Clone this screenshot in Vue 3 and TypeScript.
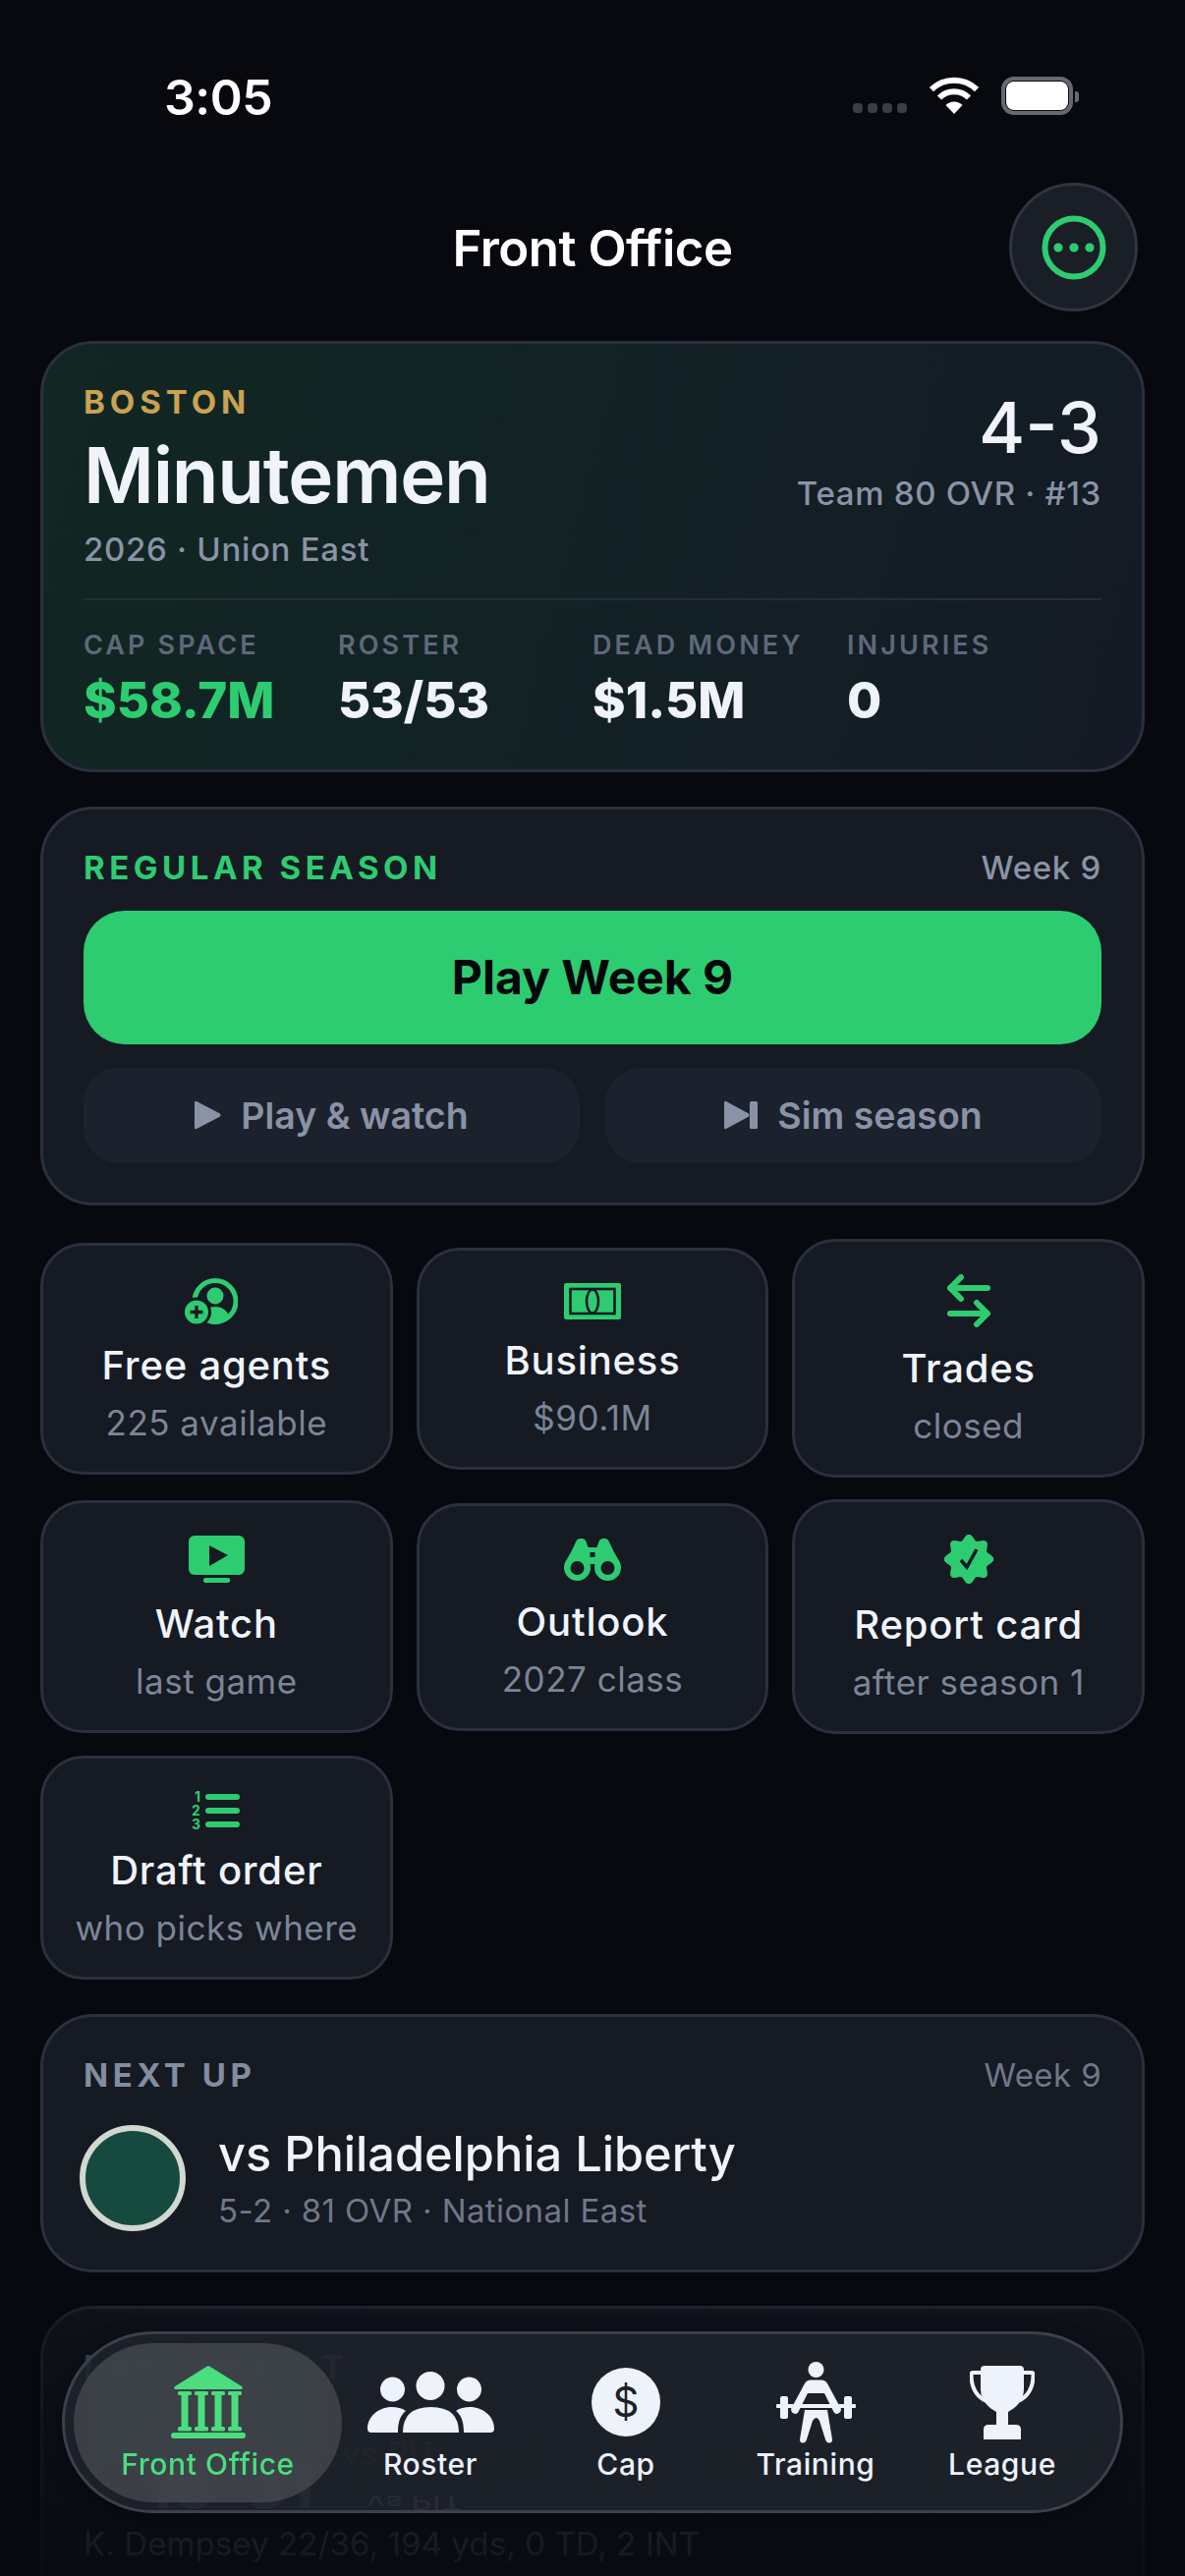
<script setup lang="ts">
const stats = [
  { label: 'CAP SPACE', value: '$58.7M', green: true },
  { label: 'ROSTER', value: '53/53', green: false },
  { label: 'DEAD MONEY', value: '$1.5M', green: false },
  { label: 'INJURIES', value: '0', green: false },
]

const tiles = [
  { icon: 'agents', title: 'Free agents', sub: '225 available' },
  { icon: 'business', title: 'Business', sub: '$90.1M' },
  { icon: 'trades', title: 'Trades', sub: 'closed' },
  { icon: 'watch', title: 'Watch', sub: 'last game' },
  { icon: 'outlook', title: 'Outlook', sub: '2027 class' },
  { icon: 'report', title: 'Report card', sub: 'after season 1' },
  { icon: 'draft', title: 'Draft order', sub: 'who picks where' },
]

// wavy seal outline for the report card icon
function sealPath(): string {
  const pts: string[] = []
  for (let i = 0; i < 96; i++) {
    const a = (i / 96) * Math.PI * 2
    const r = 22.5 + 2.8 * Math.cos(a * 8)
    pts.push(`${(26 + r * Math.sin(a)).toFixed(2)} ${(25 - r * Math.cos(a)).toFixed(2)}`)
  }
  return 'M' + pts.join('L') + 'Z'
}
const seal = sealPath()

const tabs = [
  { icon: 'bank', label: 'Front Office', active: true },
  { icon: 'people', label: 'Roster', active: false },
  { icon: 'cap', label: 'Cap', active: false },
  { icon: 'training', label: 'Training', active: false },
  { icon: 'league', label: 'League', active: false },
]
</script>

<template>
  <div class="screen">
    <div class="status">
      <span class="time">3:05</span>
      <div class="status-right">
        <div class="signal"><i></i><i></i><i></i><i></i></div>
        <svg class="wifi" width="50" height="38" viewBox="0 0 50 38" fill="none" stroke="#fff" stroke-width="6">
          <path d="M2 13A33 33 0 0 1 48 13" />
          <path d="M10 21.5A21 21 0 0 1 40 21.5" />
          <path d="M25 38L16.5 29A12 12 0 0 1 33.5 29Z" fill="#fff" stroke="none" />
        </svg>
        <div class="battery"><b></b></div>
      </div>
    </div>

    <header class="nav">
      <h1>Front Office</h1>
      <button class="menu">
        <svg width="66" height="66" viewBox="0 0 66 66" fill="none">
          <circle cx="33" cy="33" r="29.5" stroke="#2ecc71" stroke-width="6" />
          <circle cx="17" cy="33" r="4.6" fill="#2ecc71" />
          <circle cx="33" cy="33" r="4.6" fill="#2ecc71" />
          <circle cx="49" cy="33" r="4.6" fill="#2ecc71" />
        </svg>
      </button>
    </header>

    <main class="content">
      <section class="card team">
        <div class="team-top">
          <div>
            <div class="city">BOSTON</div>
            <div class="name">Minutemen</div>
            <div class="muted">2026 · Union East</div>
          </div>
          <div class="record-box">
            <div class="record">4-3</div>
            <div class="muted">Team 80 OVR · #13</div>
          </div>
        </div>
        <div class="stats">
          <div v-for="s in stats" :key="s.label">
            <div class="stat-label">{{ s.label }}</div>
            <div class="stat-value" :class="{ green: s.green }">{{ s.value }}</div>
          </div>
        </div>
      </section>

      <section class="card season">
        <div class="row-between">
          <span class="eyebrow green">REGULAR SEASON</span>
          <span class="muted">Week 9</span>
        </div>
        <button class="primary">Play Week 9</button>
        <div class="actions">
          <button class="secondary">
            <svg width="27" height="30" viewBox="0 0 27 30"><path d="M2 1L26 13.5Q27 15 26 16.5L2 29Q0 29.5 0 28V2Q0 .5 2 1Z" fill="#8a93a6" /></svg>
            <span>Play &amp; watch</span>
          </button>
          <button class="secondary">
            <svg width="34" height="30" viewBox="0 0 34 30"><path d="M2 1L25 13.5Q26 15 25 16.5L2 29Q0 29.5 0 28V2Q0 .5 2 1Z" fill="#8a93a6" /><rect x="26" y="1" width="8" height="28" rx="1.5" fill="#8a93a6" /></svg>
            <span>Sim season</span>
          </button>
        </div>
      </section>

      <section class="tiles">
        <div v-for="t in tiles" :key="t.title" class="tile">
          <svg v-if="t.icon === 'agents'" class="off-left" width="54" height="47" viewBox="0 0 54 47">
            <circle cx="31" cy="23.5" r="21" fill="none" stroke="#2ecc71" stroke-width="5" />
            <circle cx="31" cy="18" r="8.5" fill="#2ecc71" />
            <path d="M17 39C19 32 25 29 31 29C37 29 43 32 45 39C41 44 36 47 31 47C26 47 21 44 17 39Z" fill="#2ecc71" />
            <circle cx="12" cy="34.5" r="15" fill="#151a23" />
            <circle cx="12" cy="34.5" r="12" fill="#2ecc71" />
            <path d="M12 28V41M5.5 34.5H18.5" stroke="#151a23" stroke-width="3.4" />
          </svg>
          <svg v-else-if="t.icon === 'business'" width="58" height="37" viewBox="0 0 58 37">
            <rect width="58" height="37" rx="2" fill="#2ecc71" />
            <rect x="6.5" y="6" width="45" height="25" fill="none" stroke="#151a23" stroke-width="2.6" />
            <ellipse cx="29" cy="18.5" rx="6" ry="12" fill="none" stroke="#151a23" stroke-width="2.6" />
          </svg>
          <svg v-else-if="t.icon === 'trades'" width="46" height="54" viewBox="0 0 46 54" fill="none" stroke="#2ecc71" stroke-width="6" stroke-linecap="round" stroke-linejoin="round">
            <path d="M4 14H42M15 3L4 14L15 25" />
            <path d="M4 40H42M31 29L42 40L31 51" />
          </svg>
          <svg v-else-if="t.icon === 'watch'" width="57" height="48" viewBox="0 0 57 48">
            <rect width="57" height="40" rx="6" fill="#2ecc71" />
            <path d="M21 10L40 20L21 31Z" fill="#151a23" />
            <rect x="15" y="43" width="27" height="5" rx="2" fill="#2ecc71" />
          </svg>
          <svg v-else-if="t.icon === 'outlook'" width="58" height="43" viewBox="0 0 58 43">
            <path d="M13 1.5C16 -.5 20 -.5 22 2L25 10V32H0.5C0 28 3 20 7 14Z" fill="#2ecc71" />
            <path d="M45 1.5C42 -.5 38 -.5 36 2L33 10V32H57.5C58 28 55 20 51 14Z" fill="#2ecc71" />
            <rect x="24" y="9" width="10" height="17" fill="#2ecc71" />
            <rect x="26.5" y="14" width="5" height="5" fill="#151a23" />
            <circle cx="13.5" cy="29.5" r="13.5" fill="#2ecc71" />
            <circle cx="44.5" cy="29.5" r="13.5" fill="#2ecc71" />
            <circle cx="13.5" cy="30" r="7" fill="#151a23" />
            <circle cx="44.5" cy="30" r="7" fill="#151a23" />
          </svg>
          <svg v-else-if="t.icon === 'report'" width="52" height="50" viewBox="0 0 52 50">
            <path :d="seal" fill="#2ecc71" />
            <path d="M18 26L24 33L34 15" fill="none" stroke="#151a23" stroke-width="3.6" />
          </svg>
          <svg v-else-if="t.icon === 'draft'" class="list-icon" width="50" height="39" viewBox="0 0 50 39">
            <text x="3" y="11" class="list-num">1</text>
            <text x="0" y="25" class="list-num">2</text>
            <text x="0" y="39" class="list-num">3</text>
            <rect x="14" y="3" width="35" height="6" rx="3" fill="#2ecc71" />
            <rect x="14" y="17" width="35" height="6" rx="3" fill="#2ecc71" />
            <rect x="14" y="31" width="35" height="6" rx="3" fill="#2ecc71" />
          </svg>
          <div class="tile-title">{{ t.title }}</div>
          <div class="tile-sub">{{ t.sub }}</div>
        </div>
      </section>

      <section class="card next">
        <div class="row-between">
          <span class="eyebrow grey">NEXT UP</span>
          <span class="dim">Week 9</span>
        </div>
        <div class="match">
          <div class="crest"></div>
          <div>
            <div class="match-title">vs Philadelphia Liberty</div>
            <div class="dim">5-2 · 81 OVR · National East</div>
          </div>
        </div>
      </section>

      <section class="card last">
        <div class="eyebrow grey">LAST RESULT</div>
        <div class="score-row">
          <span class="score">16-31</span>
          <span class="dim vs">vs PIT</span>
        </div>
        <div class="dim stat-line">K. Dempsey 22/36, 194 yds, 0 TD, 2 INT</div>
      </section>
    </main>

    <div class="fade"></div>

    <nav class="tabbar">
      <span class="mirror">vs PIT</span>
      <div v-for="tab in tabs" :key="tab.label" class="tab" :class="{ active: tab.active }">
        <div class="tab-icon">
          <svg v-if="tab.icon === 'bank'" width="76" height="74" viewBox="0 0 76 74" fill="#4ade80">
            <path d="M36 1Q38 -.5 40 1L72 21Q74 24 71 24H5Q2 24 4 21Z" />
            <g v-for="x in [7, 24, 41, 58]" :key="x">
              <rect :x="x" y="26" width="14" height="4" rx="1.5" />
              <rect :x="x + 3.5" y="28" width="7" height="36" />
              <rect :x="x" y="62" width="14" height="4.5" rx="1.5" />
            </g>
            <rect y="68" width="76" height="6" rx="3" />
          </svg>
          <svg v-else-if="tab.icon === 'people'" width="129" height="62" viewBox="0 0 129 62" fill="#eef2fb">
            <circle cx="25.5" cy="18" r="12.5" />
            <circle cx="64" cy="14.5" r="14.5" />
            <circle cx="103.5" cy="18" r="12.5" />
            <path d="M0 58C0 46 11 36 25 36C30 36 35 37 39 40C34 44 31 50 31 62H4Q0 62 0 58Z" />
            <path d="M129 58C129 46 118 36 104 36C99 36 94 37 90 40C95 44 98 50 98 62H125Q129 62 129 58Z" />
            <path d="M36 62Q36 36 64.5 36Q93 36 93 62H36Z" />
          </svg>
          <div v-else-if="tab.icon === 'cap'" class="coin">$</div>
          <svg v-else-if="tab.icon === 'training'" width="81" height="83" viewBox="0 0 81 83" fill="#eef2fb">
            <circle cx="40.5" cy="8" r="8" />
            <path d="M35 18.5H46Q50 18.5 52 22L66 48Q66 52 62 53Q59 53 58 50L49 32H32L23 50Q22 53 19 53Q15 52 15 48L29 22Q31 18.5 35 18.5Z" />
            <rect y="43" width="81" height="4" rx="1" />
            <rect x="4" y="35" width="8" height="23" rx="2" />
            <rect x="69" y="35" width="8" height="23" rx="2" />
            <path d="M29 49H52L57 79Q57 82.5 54 82.5Q51 82.5 50 79L44 60Q41 54 37 60L31 79Q30 82.5 27 82.5Q24 82.5 24 79Z" />
          </svg>
          <svg v-else-if="tab.icon === 'league'" width="66" height="75" viewBox="0 0 66 75" fill="#eef2fb">
            <path d="M11 4Q11 0 15 0H51Q55 0 55 4V24C55 36 46 43 39 47V62H27V47C20 43 11 36 11 24Z" />
            <path d="M12 7H3Q1.5 7 1.5 9C1.5 24 8 32 17 36M54 7H63Q64.5 7 64.5 9C64.5 24 58 32 49 36" fill="none" stroke="#eef2fb" stroke-width="4" />
            <path d="M14 65Q14 60 19 60H47Q52 60 52 65V75H14Z" />
          </svg>
        </div>
        <span class="tab-label">{{ tab.label }}</span>
      </div>
    </nav>
  </div>
</template>

<style>
html,
body {
  margin: 0;
  background: #07090f;
}
</style>

<style scoped>
.screen {
  position: relative;
  width: 1206px;
  height: 2622px;
  overflow: hidden;
  background: #07090f;
  font-family: Inter, "Liberation Sans", sans-serif;
  color: #f0f4fa;
}

.status {
  height: 186px;
  padding: 69px 48px 0 167px;
  box-sizing: border-box;
  display: flex;
  justify-content: space-between;
  align-items: flex-start;
}

.time {
  font-size: 50px;
  line-height: 60px;
  font-weight: 600;
  color: #fff;
  letter-spacing: -0.01em;
}

.status-right {
  display: flex;
  align-items: flex-end;
  gap: 23px;
  margin-top: 9px;
  margin-right: 66px;
}

.signal {
  display: flex;
  gap: 5px;
  margin-bottom: 2px;
}

.signal i {
  width: 10px;
  height: 10px;
  border-radius: 4px;
  background: #3b3e45;
}

.wifi {
  margin-bottom: 1px;
}

.battery {
  position: relative;
  width: 73px;
  height: 39px;
  box-sizing: border-box;
  border: 4px solid #666a70;
  border-radius: 13px;
  padding: 1px;
}

.battery::after {
  content: "";
  position: absolute;
  right: -10px;
  top: 11px;
  width: 4px;
  height: 11px;
  border-radius: 0 3px 3px 0;
  background: #666a70;
}

.battery b {
  display: block;
  height: 100%;
  border-radius: 8px;
  background: #fff;
}

.nav {
  height: 131px;
  padding: 0 48px;
  display: grid;
  grid-template-columns: 131px 1fr 131px;
  align-items: center;
}

.nav h1 {
  grid-column: 2;
  margin: 2px 0 0;
  text-align: center;
  font-size: 51px;
  line-height: 62px;
  font-weight: 600;
  color: #fff;
  letter-spacing: -0.01em;
}

.menu {
  grid-column: 3;
  width: 131px;
  height: 131px;
  border-radius: 50%;
  padding: 0;
  border: 3px solid #2f3442;
  background: #1a1e27;
  display: flex;
  align-items: center;
  justify-content: center;
}

.content {
  margin-top: 30px;
  padding: 0 41px;
  display: flex;
  flex-direction: column;
  gap: 34.5px;
}

.card {
  border: 3px solid #2a303e;
  border-radius: 54px;
  padding: 39px 41px;
  background: #151a23;
}

.team {
  background: linear-gradient(105deg, #112722 0%, #122225 45%, #141a25 100%);
}

.team-top {
  display: flex;
  justify-content: space-between;
  align-items: flex-start;
  padding-bottom: 30px;
  border-bottom: 2px solid #262d39;
}

.city {
  font-size: 33px;
  line-height: 40px;
  font-weight: 700;
  letter-spacing: 0.15em;
  color: #c9a352;
}

.name {
  margin-top: 8px;
  font-size: 78px;
  line-height: 94px;
  font-weight: 600;
  letter-spacing: -0.016em;
  color: #f0f4fa;
}

.muted {
  font-size: 33px;
  line-height: 40px;
  font-weight: 500;
  letter-spacing: 0.7px;
  color: #8a93a6;
}

.name + .muted {
  margin-top: 8px;
}

.record-box {
  text-align: right;
}

.record {
  margin-top: 2px;
  margin-bottom: 4px;
  font-size: 72px;
  line-height: 87px;
  font-weight: 500;
}

.stats {
  margin-top: 29px;
  display: grid;
  grid-template-columns: repeat(4, 1fr);
}

.stat-label {
  font-size: 27px;
  line-height: 33px;
  font-weight: 600;
  letter-spacing: 0.115em;
  color: #5e6879;
}

.stat-value {
  margin-top: 9px;
  font-size: 51px;
  line-height: 62px;
  font-weight: 800;
  color: #f0f4fa;
}

.green {
  color: #2ecc71;
}

.row-between {
  display: flex;
  justify-content: space-between;
  align-items: center;
}

.eyebrow {
  font-size: 33px;
  line-height: 40px;
  font-weight: 700;
  letter-spacing: 0.137em;
}

.eyebrow.green {
  color: #2ecc71;
}

.eyebrow.grey {
  color: #838da0;
}

.dim {
  font-size: 33px;
  line-height: 40px;
  font-weight: 400;
  letter-spacing: 0.4px;
  color: #6f7889;
}

.stat-line {
  letter-spacing: 0.1px;
}

.primary {
  display: block;
  width: 100%;
  height: 136px;
  margin-top: 24px;
  border: 0;
  border-radius: 42px;
  background: #2ecc71;
  color: #05070a;
  font-family: inherit;
  font-size: 48px;
  font-weight: 700;
}

.actions {
  margin-top: 24px;
  display: grid;
  grid-template-columns: 1fr 1fr;
  gap: 26px;
  padding-bottom: 1px;
}

.secondary {
  height: 97px;
  border: 0;
  border-radius: 36px;
  background: #1c222d;
  color: #8a93a6;
  font-family: inherit;
  font-size: 37.5px;
  font-weight: 600;
  display: flex;
  align-items: center;
  justify-content: center;
  gap: 20px;
}

.tiles {
  display: grid;
  grid-template-columns: repeat(3, 1fr);
  column-gap: 24px;
  row-gap: 22px;
  align-items: center;
}

.tile {
  border: 3px solid #2a303e;
  border-radius: 44px;
  background: #151a23;
  padding: 33px 0 30px;
  display: flex;
  flex-direction: column;
  align-items: center;
}

.tile svg {
  display: block;
}

.tile .off-left {
  margin-left: -10px;
}

.list-num {
  font-size: 14px;
  font-weight: 700;
  fill: #2ecc71;
}

.tile-title {
  margin-top: 18px;
  font-size: 40px;
  line-height: 47px;
  font-weight: 500;
  letter-spacing: 0.8px;
  color: #f0f4fa;
}

.tile-sub {
  margin-top: 15px;
  font-size: 35px;
  line-height: 40px;
  letter-spacing: 0.5px;
  color: #7c8596;
}

.match {
  margin-top: 31px;
  display: flex;
  align-items: center;
  gap: 33px;
}

.crest {
  width: 108px;
  height: 108px;
  margin-left: -4px;
  box-sizing: border-box;
  border: 6px solid #d0d8d0;
  border-radius: 50%;
  background: #174a3e;
}

.match-title {
  font-size: 48.7px;
  line-height: 58px;
  font-weight: 500;
  margin-bottom: 8px;
}

.last {
  height: 400px;
}

.score-row {
  display: flex;
  align-items: flex-end;
  gap: 28px;
  height: 140px;
}

.score {
  margin-left: 62px;
  font-size: 66px;
  line-height: 80px;
  font-weight: 700;
}

.vs {
  align-self: flex-start;
  margin-top: 48px;
}

.fade {
  position: absolute;
  left: 0;
  right: 0;
  top: 2310px;
  bottom: 0;
  background: linear-gradient(180deg, rgba(7, 9, 15, 0) 0%, rgba(7, 9, 15, 0.55) 18%, rgba(7, 9, 15, 0.88) 100%);
}

.tabbar {
  position: absolute;
  left: 63px;
  top: 2373px;
  width: 1080px;
  height: 185px;
  box-sizing: border-box;
  padding: 9px;
  border: 3px solid #3a404e;
  border-radius: 93px;
  background: rgba(32, 36, 44, 0.86);
  box-shadow: 0 6px 20px rgba(0, 0, 0, 0.35);
  display: grid;
  grid-template-columns: 273px 180px 218px 168px 212px;
}

.mirror {
  position: absolute;
  left: 307px;
  top: 162px;
  font-size: 33px;
  line-height: 18px;
  font-weight: 500;
  color: #272b35;
  transform: scaleY(-0.6);
}

.tab {
  position: relative;
  height: 162px;
  padding-top: 15px;
  box-sizing: border-box;
  display: flex;
  flex-direction: column;
  align-items: center;
  border-radius: 81px;
}

.tab.active {
  background: rgba(255, 255, 255, 0.14);
  backdrop-filter: blur(8px);
}

.tab-icon {
  height: 90px;
  display: flex;
  align-items: center;
  justify-content: center;
}

.tab-icon svg {
  display: block;
}

.coin {
  width: 70px;
  height: 70px;
  border-radius: 50%;
  background: #eef2fb;
  color: #1c2028;
  font-size: 42px;
  line-height: 70px;
  text-align: center;
}

.tab-label {
  font-size: 30px;
  line-height: 36px;
  font-weight: 500;
  letter-spacing: 0.6px;
  color: #eef2fb;
}

.tab.active .tab-label {
  color: #4ade80;
}
</style>
